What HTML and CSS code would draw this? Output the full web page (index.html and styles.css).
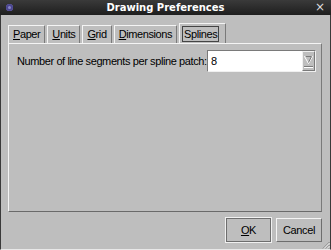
FILE: index.html
```html
<!DOCTYPE html>
<html>
<head>
<meta charset="utf-8">
<link rel="stylesheet" href="styles.css">
</head>
<body>
<div class="window">
  <div class="titlebar">
    <span class="app-icon"></span>
    <span class="title">Drawing Preferences</span>
    <span class="close">×</span>
  </div>
  <div class="content">
    <div class="tabs">
      <div class="tab"><u>P</u>aper</div>
      <div class="tab"><u>U</u>nits</div>
      <div class="tab"><u>G</u>rid</div>
      <div class="tab"><u>D</u>imensions</div>
      <div class="tab active"><span class="focus">Splines</span></div>
    </div>
    <div class="panel">
      <div class="row">
        <span class="label">Number of line segments per spline patch:</span>
        <div class="combo">
          <span class="value">8</span>
          <span class="drop">
            <svg width="9" height="13" viewBox="0 0 9 13">
              <path d="M0.5 1.5 H8.5 L4.5 8.5 Z" fill="none" stroke="#ffffff" stroke-width="1"/>
              <path d="M1.5 1.5 H7.5 L4.5 7.5" fill="none" stroke="#7a7a7a" stroke-width="1"/>
              <path d="M0 11.5 H9" stroke="#7a7a7a" stroke-width="1"/>
              <path d="M0 12.5 H9" stroke="#ffffff" stroke-width="1"/>
            </svg>
          </span>
        </div>
      </div>
    </div>
    <div class="buttons">
      <div class="default-frame"><button class="btn"><u>O</u>K</button></div>
      <button class="btn">Cancel</button>
    </div>
    <svg class="grip" width="8" height="8" viewBox="0 0 8 8">
      <path d="M7.5 1 L1 7.5 M7.5 4 L4 7.5 M7.5 7 L7 7.5" stroke="#7a7a7a" stroke-width="1"/>
      <path d="M7.5 2 L2 7.5 M7.5 5 L5 7.5" stroke="#f0f0f0" stroke-width="1"/>
    </svg>
  </div>
</div>
</body>
</html>
```
FILE: styles.css
```css
html, body {
  margin: 0;
  padding: 0;
  width: 331px;
  height: 250px;
  overflow: hidden;
  background: #bebebe;
}
.window {
  width: 331px;
  height: 250px;
  display: flex;
  flex-direction: column;
  background: #bebebe;
  font-family: "Liberation Sans", Arial, sans-serif;
  font-size: 11px;
  letter-spacing: -0.4px;
  color: #000;
  box-sizing: border-box;
}
.titlebar {
  height: 15px;
  background: linear-gradient(#3a3a3a, #1e1e1e);
  position: relative;
  display: flex;
  align-items: center;
  justify-content: center;
  color: #fff;
  letter-spacing: 0;
}
.title {
  font-family: "DejaVu Sans", sans-serif;
  font-weight: bold;
  font-size: 10px;
}
.app-icon {
  position: absolute;
  left: 6px;
  top: 4px;
  width: 7px;
  height: 7px;
  border-radius: 50%;
  background: #8a86c8;
  box-shadow: inset 0 0 0 2px #4b4690;
}
.close {
  position: absolute;
  right: 6px;
  top: 0px;
  font-family: "DejaVu Sans", sans-serif;
  font-size: 12px;
  line-height: 15px;
  color: #ddd;
}
.content {
  flex: 1;
  position: relative;
  border-left: 1px solid #3a3a3a;
  border-right: 1px solid #3a3a3a;
  border-bottom: 1px solid #e8e8e8;
  padding: 8px 8px 0 7px;
  display: flex;
  flex-direction: column;
  white-space: nowrap;
}
.tabs {
  display: flex;
  align-items: flex-end;
  gap: 2px;
  height: 20px;
}
.tab {
  height: 18px;
  line-height: 17px;
  padding: 0 4px 0 4px;
  border-top: 1px solid #f4f4f4;
  border-left: 1px solid #f4f4f4;
  border-right: 1px solid #7a7a7a;
  box-sizing: border-box;
}
.tab u, .btn u { text-decoration: underline; text-underline-offset: 1px; }
.tab.active {
  height: 20px;
  padding: 2px 6px 0 2px;
  line-height: 14px;
}
.tab.active .focus {
  display: inline-block;
  border: 1px solid #444;
  padding: 0 1px 0 1px;
  height: 14px;
  line-height: 14px;
}
.panel {
  height: 169px;
  border-top: 1px solid #f4f4f4;
  border-left: 1px solid #f4f4f4;
  border-right: 1px solid #7a7a7a;
  border-bottom: 1px solid #6a6a6a;
  box-sizing: border-box;
  padding: 6px 5px 0 8px;
}
.row {
  display: flex;
  align-items: center;
  justify-content: space-between;
}
.combo {
  width: 109px;
  height: 22px;
  box-sizing: border-box;
  background: #fff;
  border-top: 1px solid #7a7a7a;
  border-left: 1px solid #7a7a7a;
  border-right: 1px solid #f0f0f0;
  border-bottom: 1px solid #f0f0f0;
  display: flex;
  align-items: stretch;
}
.value {
  flex: 1;
  padding-left: 3px;
  line-height: 20px;
}
.drop {
  width: 13px;
  background: #bebebe;
  display: flex;
  align-items: center;
  justify-content: center;
  border-left: 1px solid #f0f0f0;
  border-top: 1px solid #f0f0f0;
  border-right: 1px solid #7a7a7a;
  border-bottom: 1px solid #7a7a7a;
  box-sizing: border-box;
}
.buttons {
  display: flex;
  justify-content: flex-end;
  align-items: center;
  gap: 4px;
  padding-top: 5px;
}
.default-frame {
  border: 1px solid #f0f0f0;
  display: flex;
}
.btn {
  font-family: "Liberation Sans", Arial, sans-serif;
  font-size: 11px;
  letter-spacing: -0.4px;
  color: #000;
  background: #bebebe;
  height: 24px;
  margin: 0;
  border-top: 1px solid #f4f4f4;
  border-left: 1px solid #f4f4f4;
  border-right: 1px solid #6e6e6e;
  border-bottom: 1px solid #6e6e6e;
  box-sizing: border-box;
  padding: 0;
}
.default-frame .btn {
  width: 45px;
  border-color: #6e6e6e;
}
.buttons > .btn {
  width: 46px;
}
.grip {
  position: absolute;
  right: 0;
  bottom: 0;
}
```
